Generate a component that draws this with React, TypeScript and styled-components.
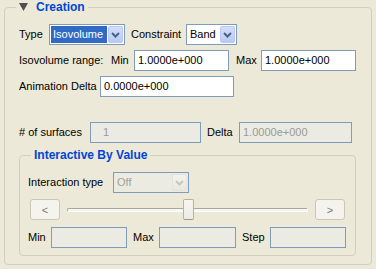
import React from 'react';
import styled, { createGlobalStyle } from 'styled-components';

const Global = createGlobalStyle`
  html, body { margin: 0; padding: 0; background: #ECE9D8; }
  body {
    font-family: "Liberation Sans", Arial, sans-serif;
    font-size: 11px;
    color: #000;
  }
  * { box-sizing: border-box; }
`;

const Page = styled.div`
  width: 376px;
  height: 269px;
  padding: 0 4px;
`;

const Group = styled.fieldset<{ $w: number }>`
  margin: 0;
  padding: 0;
  min-width: 0;
  width: ${p => p.$w}px;
  border: 1px solid #D0D0BF;
  border-radius: 4px;
`;

const Legend = styled.legend<{ $ml: number }>`
  margin-left: ${p => p.$ml}px;
  padding: 0 3px;
  height: 14px;
  line-height: 14px;
  font-size: 12px;
  font-weight: bold;
  color: #0046D5;
  display: flex;
  align-items: center;
  gap: 8px;
`;

const GroupBody = styled.div<{ $pad: string }>`
  padding: ${p => p.$pad};
  display: flex;
  flex-direction: column;
`;

const Row = styled.div<{ $gap: number; $mt?: number }>`
  display: flex;
  align-items: center;
  gap: ${p => p.$gap}px;
  height: 21px;
  margin-top: ${p => p.$mt ?? 0}px;
`;

const Label = styled.span<{ $w: number }>`
  width: ${p => p.$w}px;
  flex: none;
  white-space: nowrap;
  line-height: 21px;
`;

const Input = styled.div<{ $w: number; $disabled?: boolean; $indent?: number }>`
  width: ${p => p.$w}px;
  height: 21px;
  flex: none;
  border: 1px solid #7F9DB9;
  background: ${p => (p.$disabled ? '#EBEBE4' : '#FFFFFF')};
  color: ${p => (p.$disabled ? '#9A9A90' : '#000')};
  padding-left: ${p => p.$indent ?? 3}px;
  line-height: 19px;
  white-space: nowrap;
  overflow: hidden;
`;

const Combo = styled.div<{ $w: number; $disabled?: boolean }>`
  width: ${p => p.$w}px;
  height: 21px;
  flex: none;
  border: 1px solid #7F9DB9;
  background: ${p => (p.$disabled ? '#ECEBE2' : '#FFFFFF')};
  padding: 1px;
  display: flex;
  gap: 1px;
`;

const ComboText = styled.div<{ $selected?: boolean; $disabled?: boolean }>`
  flex: 1;
  background: ${p => (p.$selected ? '#316AC5' : 'transparent')};
  color: ${p => (p.$selected ? '#FFFFFF' : p.$disabled ? '#A3A298' : '#000')};
  padding-left: 2px;
  line-height: 17px;
  white-space: nowrap;
  overflow: hidden;
`;

const ArrowBtn = styled.div<{ $disabled?: boolean }>`
  width: 15px;
  height: 17px;
  flex: none;
  border-radius: 2px;
  border: 1px solid ${p => (p.$disabled ? '#E4E3DA' : '#B9C9F1')};
  background: ${p =>
    p.$disabled
      ? 'linear-gradient(#F3F2EC, #E9E8E0)'
      : 'linear-gradient(#D3DEFB, #B8CAF6)'};
  display: flex;
  align-items: center;
  justify-content: center;
`;

const Chevron = ({ disabled }: { disabled?: boolean }) => (
  <svg width="9" height="6" viewBox="0 0 9 6">
    <path
      d="M1 1 L4.5 4.5 L8 1"
      fill="none"
      stroke={disabled ? '#C9C7BB' : '#4D6185'}
      strokeWidth="2"
    />
  </svg>
);

const Triangle = () => (
  <svg width="9" height="8" viewBox="0 0 9 8">
    <polygon points="0,0 9,0 4.5,8" fill="#4F4F4F" />
  </svg>
);

const PushButton = styled.button`
  width: 30px;
  height: 21px;
  flex: none;
  margin: 0;
  padding: 0;
  border: 1px solid #C9C7BA;
  border-radius: 3px;
  background: #F4F3EE;
  color: #7A7A74;
  font-family: "Liberation Sans", Arial, sans-serif;
  font-size: 11px;
`;

const SliderArea = styled.div`
  width: 255px;
  height: 21px;
  flex: none;
  padding: 0 7px;
  display: flex;
  align-items: center;
`;

const Track = styled.div`
  position: relative;
  flex: 1;
  height: 4px;
  border-top: 1px solid #A9A79B;
  border-left: 1px solid #A9A79B;
  border-bottom: 1px solid #FFFFFF;
  border-right: 1px solid #FFFFFF;
  background: #F7F6F1;
  border-radius: 2px;
`;

const Thumb = styled.div`
  position: absolute;
  top: -10px;
  width: 11px;
  height: 21px;
  margin-left: -5px;
  border: 1px solid #B5B3A6;
  border-bottom-color: #9C9A8E;
  border-radius: 2px;
  background: linear-gradient(#F7F6F2, #ECEBE3);
`;

const Slider = ({ value, max }: { value: number; max: number }) => (
  <SliderArea>
    <Track>
      <Thumb style={{ left: `${(value / max) * 100}%` }} />
    </Track>
  </SliderArea>
);

export default function App() {
  return (
    <Page>
      <Global />
      <Group $w={368}>
        <Legend $ml={11}>
          <Triangle />
          <span>Creation</span>
        </Legend>
        <GroupBody $pad="10px 0 8px 14px">
          <Row $gap={6}>
            <Label $w={24}>Type</Label>
            <Combo $w={76}>
              <ComboText $selected>Isovolume</ComboText>
              <ArrowBtn><Chevron /></ArrowBtn>
            </Combo>
            <Label $w={49}>Constraint</Label>
            <Combo $w={51}>
              <ComboText>Band</ComboText>
              <ArrowBtn><Chevron /></ArrowBtn>
            </Combo>
          </Row>
          <Row $gap={7} $mt={5}>
            <Label $w={85}>Isovolume range:</Label>
            <Label $w={16}>Min</Label>
            <Input $w={95}>1.0000e+000</Input>
            <Label $w={18}>Max</Label>
            <Input $w={95}>1.0000e+000</Input>
          </Row>
          <Row $gap={7} $mt={5}>
            <Label $w={74}>Animation Delta</Label>
            <Input $w={134}>0.0000e+000</Input>
          </Row>
          <Row $gap={6} $mt={25}>
            <Label $w={65}># of surfaces</Label>
            <Input $w={111} $disabled $indent={12}>1</Input>
            <Label $w={26}>Delta</Label>
            <Input $w={113} $disabled>1.0000e+000</Input>
          </Row>
          <Group $w={337} style={{ marginTop: 5 }}>
            <Legend $ml={11}>
              <span>Interactive By Value</span>
            </Legend>
            <GroupBody $pad="10px 0 7px 8px">
              <Row $gap={7}>
                <Label $w={78}>Interaction type</Label>
                <Combo $w={76} $disabled>
                  <ComboText $disabled>Off</ComboText>
                  <ArrowBtn $disabled><Chevron disabled /></ArrowBtn>
                </Combo>
              </Row>
              <Row $gap={0} $mt={6} style={{ paddingLeft: 2 }}>
                <PushButton>&lt;</PushButton>
                <Slider value={50} max={100} />
                <PushButton>&gt;</PushButton>
              </Row>
              <Row $gap={6} $mt={7}>
                <Label $w={17}>Min</Label>
                <Input $w={76} $disabled />
                <Label $w={20}>Max</Label>
                <Input $w={77} $disabled />
                <Label $w={22}>Step</Label>
                <Input $w={76} $disabled />
              </Row>
            </GroupBody>
          </Group>
        </GroupBody>
      </Group>
    </Page>
  );
}
